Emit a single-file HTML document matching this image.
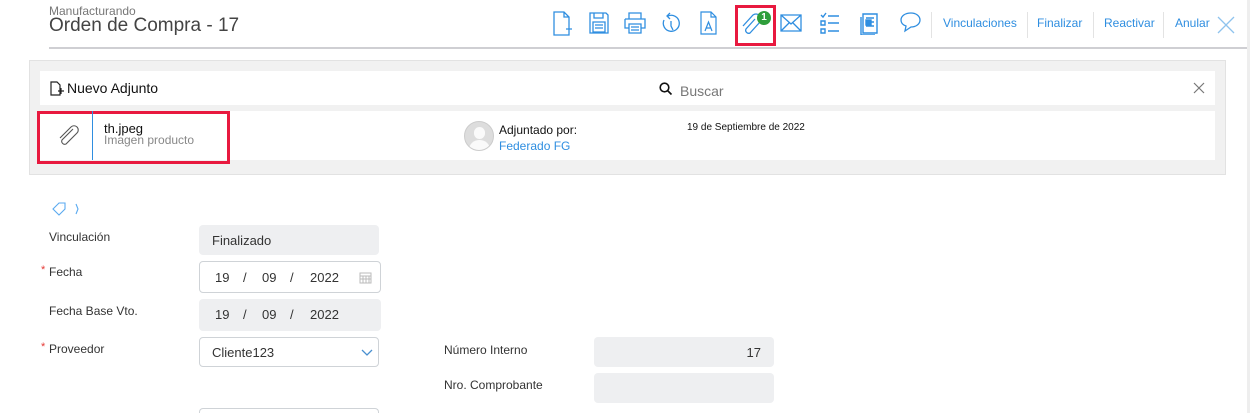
<!DOCTYPE html>
<html><head><meta charset="utf-8"><style>
*{margin:0;padding:0;box-sizing:border-box}
html{width:1250px;height:413px;overflow:hidden}
body{width:1250px;height:413px;overflow:hidden;background:#fff;font-family:"Liberation Sans",sans-serif;position:relative;color:#333}
.a{position:absolute}
.ic{position:absolute;top:11px}
.lnk{position:absolute;top:16px;font-size:12px;color:#2f8ee0}
.sep{position:absolute;top:12px;width:1px;height:26px;background:#e3e3e3}
.lbl{position:absolute;left:49px;font-size:12px;color:#333}
.star{position:absolute;left:41px;color:#e53935;font-size:11px}
.inp{position:absolute;left:199px;width:180px;height:30px;border-radius:4px;font-size:13px;color:#333}
.g{background:#eeeff1}
.b{border:1px solid #cfd3d7;background:#fff}
.d span{position:absolute;top:8px}
</style></head><body>
<div class="a" style="left:49px;top:4px;font-size:12px;color:#777">Manufacturando</div>
<div class="a" style="left:49px;top:15px;font-size:19px;color:#444">Orden de Compra - 17</div>
<div class="a" style="left:49px;top:47px;width:1201px;height:2px;background:#cfcfd3"></div>

<svg class="ic" style="left:552px" width="22" height="26" viewBox="0 0 22 26" fill="none" stroke="#2f8ee0" stroke-width="1.3"><path d="M2 1h10l5 5v18H2z M12 1v5h5 M14 18h6 M17 15v6"/></svg>
<svg class="ic" style="left:589px" width="20" height="24" viewBox="0 0 20 24" fill="none" stroke="#2f8ee0" stroke-width="1.3"><path d="M1 2h16l2 2v18H1z M5 2v5h9V2 M4 11h12v10H4z M6 14h8 M6 17h8"/></svg>
<svg class="ic" style="left:624px" width="22" height="24" viewBox="0 0 22 24" fill="none" stroke="#2f8ee0" stroke-width="1.3"><path d="M5 8V2h12v6 M1 8h20v9h-4 M5 17H1V8 M5 13h12v9H5z M7 16h8 M7 19h8"/></svg>
<svg class="ic" style="left:661px" width="20" height="24" viewBox="0 0 20 24" fill="none" stroke="#2f8ee0" stroke-width="1.3"><path d="M7 5a8 8 0 1 1-4 4 M9 2l-3 3 3 3 M10 10v5l2 4"/></svg>
<svg class="ic" style="left:700px" width="18" height="24" viewBox="0 0 18 24" fill="none" stroke="#2f8ee0" stroke-width="1.2"><path d="M1 1h10l5 5v17H1z M11 1v5h5 M5 20l3.5-9 3.5 9 M6 17h5"/></svg>
<div class="a" style="left:735px;top:5px;width:41px;height:41px;border:3px solid #e8193f"></div>
<svg class="ic" style="left:741px;top:13px" width="22" height="24" viewBox="0 0 22 24" fill="none" stroke="#2f8ee0" stroke-width="1.3"><path d="M14 6L5 16a3 3 0 0 0 4 4l10-11a5 5 0 0 0-7-7L2 13"/></svg>
<div class="a" style="left:757px;top:11px;width:14px;height:14px;border-radius:7px;background:#2e9e3b;color:#fff;font-size:10px;text-align:center;line-height:14px;font-weight:bold">1</div>
<svg class="ic" style="left:780px;top:14px" width="22" height="18" viewBox="0 0 22 18" fill="none" stroke="#2f8ee0" stroke-width="1.3"><path d="M1 1h20v16H1z M1 1l10 9 10-9 M1 17l8-8 M21 17l-8-8"/></svg>
<svg class="ic" style="left:820px" width="20" height="24" viewBox="0 0 20 24" fill="none" stroke="#2f8ee0" stroke-width="1.4"><path d="M1 4l2 2 3-4 M1 10h4v4H1z M1 18h4v4H1z M8 5h11 M8 12h11 M8 20h11"/></svg>
<svg class="ic" style="left:860px" width="20" height="24" viewBox="0 0 20 24" fill="none" stroke="#2f8ee0" stroke-width="1.4"><path d="M3 3h14v19H3z M1 6v18h14 M6 7h8 M6 11h8 M6 15h8"/><rect x="6" y="9" width="5" height="5" fill="#2f8ee0"/></svg>
<svg class="ic" style="left:900px" width="22" height="22" viewBox="0 0 22 22" fill="none" stroke="#2f8ee0" stroke-width="1.3"><path d="M11 2c5 0 9 3 9 7s-4 7-9 7l-6 4 1-5c-3-1-5-3-5-6 0-4 4-7 10-7z"/></svg>
<div class="sep" style="left:931px"></div>
<div class="lnk" style="left:943px">Vinculaciones</div>
<div class="sep" style="left:1027px"></div>
<div class="lnk" style="left:1037px">Finalizar</div>
<div class="sep" style="left:1093px"></div>
<div class="lnk" style="left:1104px">Reactivar</div>
<div class="sep" style="left:1163px"></div>
<div class="lnk" style="left:1175px">Anular</div>
<svg class="a" style="left:1217px;top:16px" width="18" height="18" viewBox="0 0 18 18" stroke="#8fc3ee" stroke-width="1.3"><path d="M1 1l16 16M17 1L1 17"/></svg>

<div class="a" style="left:29px;top:60px;width:1197px;height:115px;background:#f1f1f1;border:1px solid #e2e2e2"></div>
<div class="a" style="left:40px;top:71px;width:1175px;height:34px;background:#fff"></div>
<svg class="a" style="left:50px;top:81px" width="14" height="15" viewBox="0 0 14 15" fill="none" stroke="#222" stroke-width="1.2"><path d="M1 1h6l3 3v10H1z M8 10h6 M11 7v6"/></svg>
<div class="a" style="left:67px;top:80px;font-size:14px;color:#111">Nuevo Adjunto</div>
<svg class="a" style="left:659px;top:82px" width="14" height="14" viewBox="0 0 14 14" fill="none" stroke="#111" stroke-width="1.6"><circle cx="5.5" cy="5.5" r="4.3"/><path d="M8.5 8.5l4 4"/></svg>
<div class="a" style="left:680px;top:83px;font-size:14px;color:#777">Buscar</div>
<svg class="a" style="left:1193px;top:82px" width="12" height="12" viewBox="0 0 12 12" stroke="#777" stroke-width="1.2"><path d="M1 1l10 10M11 1L1 11"/></svg>
<div class="a" style="left:40px;top:111px;width:1175px;height:49px;background:#fff"></div>
<div class="a" style="left:37px;top:111px;width:193px;height:53px;border:3px solid #e8193f"></div>
<div class="a" style="left:92px;top:111px;width:1px;height:49px;background:#2f8ee0"></div>
<svg class="a" style="left:57px;top:124px" width="24" height="24" viewBox="0 0 24 24" fill="none" stroke="#555" stroke-width="1.1"><path d="M16 5L5 16a3 3 0 0 0 4 4l11-11a4 4 0 0 0-6-6L3 14"/></svg>
<div class="a" style="left:104px;top:121px;font-size:13px;color:#111">th.jpeg</div>
<div class="a" style="left:104px;top:133px;font-size:12px;color:#888">Imagen producto</div>
<div class="a" style="left:464px;top:121px;width:30px;height:30px;border-radius:15px;background:#ddd;border:1px solid #ccc;overflow:hidden"><div class="a" style="left:9px;top:5px;width:11px;height:12px;border-radius:6px;background:#fafafa"></div><div class="a" style="left:4px;top:18px;width:21px;height:14px;border-radius:10px 10px 0 0;background:#fafafa"></div></div>
<div class="a" style="left:499px;top:123px;font-size:12px;color:#111">Adjuntado por:</div>
<div class="a" style="left:499px;top:139px;font-size:12px;color:#2f8ee0">Federado FG</div>
<div class="a" style="left:687px;top:122px;font-size:10px;color:#111">19 de Septiembre de 2022</div>

<svg class="a" style="left:51px;top:202px" width="30" height="14" viewBox="0 0 30 14" fill="none" stroke="#5aaaf0" stroke-width="1.1"><path d="M2 7l6-6h6v6l-6 6z M11 3.5h.1 M25 2l2 5-2 5"/></svg>
<div class="lbl" style="top:230px">Vinculación</div>
<div class="inp g" style="top:225px"><span class="a" style="left:13px;top:8px">Finalizado</span></div>
<div class="star" style="top:264px">*</div><div class="lbl" style="top:265px">Fecha</div>
<div class="inp b d" style="top:261px;width:182px;height:32px"><span style="left:15px">19</span><span style="left:43px">/</span><span style="left:62px">09</span><span style="left:90px">/</span><span style="left:110px">2022</span>
<svg class="a" style="left:159px;top:9px" width="13" height="13" viewBox="0 0 13 13" fill="none" stroke="#bbb" stroke-width="1"><path d="M1 2h11v10H1z M1 5h11 M4 5v7 M7 5v7 M10 5v7 M1 8h11"/></svg></div>
<div class="lbl" style="top:304px">Fecha Base Vto.</div>
<div class="inp g d" style="top:299px;width:182px;height:32px"><span style="left:16px">19</span><span style="left:44px">/</span><span style="left:63px">09</span><span style="left:91px">/</span><span style="left:111px">2022</span></div>
<div class="star" style="top:341px">*</div><div class="lbl" style="top:342px">Proveedor</div>
<div class="inp b" style="top:337px;height:30px"><span class="a" style="left:12px;top:7px">Cliente123</span>
<svg class="a" style="left:161px;top:11px" width="12" height="8" viewBox="0 0 12 8" fill="none" stroke="#4a90d0" stroke-width="1.3"><path d="M1 1l5 5 5-5"/></svg></div>
<div class="inp b" style="top:408px;height:5px;border-bottom:none;border-radius:4px 4px 0 0"></div>
<div class="a" style="left:444px;top:343px;font-size:12px">Número Interno</div>
<div class="a g" style="left:594px;top:337px;width:180px;height:30px;border-radius:4px"><span class="a" style="right:13px;top:8px;font-size:13px">17</span></div>
<div class="a" style="left:444px;top:378px;font-size:12px">Nro. Comprobante</div>
<div class="a g" style="left:594px;top:373px;width:180px;height:30px;border-radius:4px"></div>
<div class="a" style="left:1247px;top:0;width:3px;height:413px;background:#eee"></div>
</body></html>
